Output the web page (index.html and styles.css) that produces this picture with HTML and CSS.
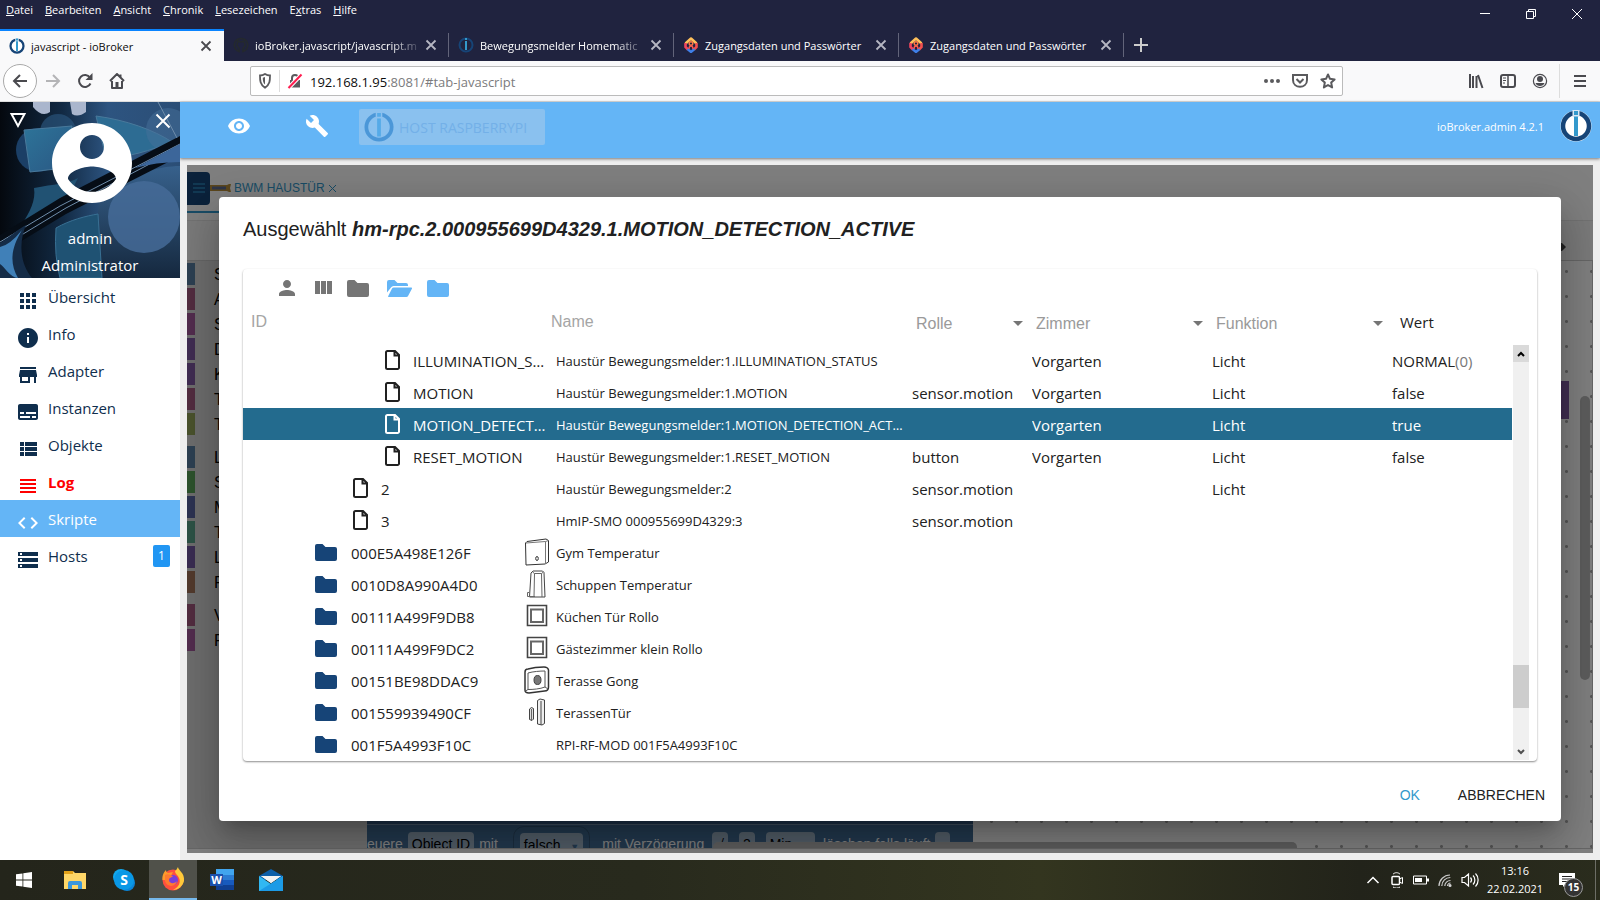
FILE: index.html
```html
<!DOCTYPE html>
<html lang="de">
<head>
    <meta charset="UTF-8">
    <meta name="viewport" content="width=device-width, initial-scale=1.0">
    <title>javascript - ioBroker</title>
    <link rel="stylesheet" href="styles.css">
</head>
<body>

    <!-- Icons -->
    <svg class="sprite" aria-hidden="true">
        <symbol id="i-x" viewBox="0 0 12 12"><path d="M1.500 1.500l9 9M10.500 1.500l-9 9" fill="none" stroke="currentColor" stroke-width="1.800"/></symbol>
        <symbol id="i-logo" viewBox="0 0 32 32"><circle cx="16" cy="16" r="15.500" fill="#fff"/><circle cx="16" cy="16" r="13" fill="none" stroke="#164477" stroke-width="4.500"/><path d="M12.500 0h7v7h-7z" fill="#d8e8f4"/><path d="M14 1h4v4h-4zM14 6.500h4v19.500h-4z" fill="#3399cc"/></symbol>
        <symbol id="i-fritz" viewBox="0 0 16 16"><path d="M2.500 6.500L8 1.500l5.500 5" fill="none" stroke="#ffc05a" stroke-width="2.600" stroke-linejoin="round"/><path d="M2.500 6v4L5 12.500" fill="none" stroke="#f0455e" stroke-width="2.600"/><path d="M13.500 6v4L11 12.500" fill="none" stroke="#f2504f" stroke-width="2.600"/><path d="M4.500 12L8 15l3.500-3" fill="none" stroke="#3e7fe8" stroke-width="2.400"/><circle cx="8" cy="6.500" r="1.800" fill="none" stroke="#ff7a45" stroke-width="1.400"/><path d="M6 12c0-4 4-4 4 0" fill="none" stroke="#ff5a50" stroke-width="1.400"/></symbol>
        <symbol id="i-file" viewBox="0 0 15 20"><path d="M1 2.500A1.500 1.500 0 0 1 2.500 1H10l4 4v12.500a1.500 1.500 0 0 1-1.500 1.500h-10A1.500 1.500 0 0 1 1 17.500zM9.500 1v4.500H14" fill="none" stroke="currentColor" stroke-width="2"/></symbol>
        <symbol id="i-folder" viewBox="0 0 22 17"><path d="M0 2a2 2 0 0 1 2-2h5.500l3 3H20a2 2 0 0 1 2 2v10a2 2 0 0 1-2 2H2a2 2 0 0 1-2-2z" fill="currentColor"/></symbol>
        <symbol id="i-open" viewBox="0 0 25 17"><path d="M0 12.500V2a2 2 0 0 1 2-2h5.500l3 3H19a2 2 0 0 1 2 2v1H6.500A3 3 0 0 0 4 7.500zM1 16.500L5 8.500A2 2 0 0 1 6.800 7.400H24a1 1 0 0 1 .9 1.400l-3.700 7A2.200 2.200 0 0 1 19.300 17H1.500z" fill="currentColor"/></symbol>
        <symbol id="i-caret" viewBox="0 0 10 5"><path d="M0 0h10L5 5z" fill="currentColor"/></symbol>
        <symbol id="i-frame" viewBox="0 0 28 28"><path d="M4.500 3.500h19v20h-19z" fill="#fff" stroke="#444" stroke-width="1.600"/><path d="M8 7.500h12v12.500H8z" fill="#fff" stroke="#666" stroke-width="2"/></symbol>
    </svg>

    <!-- Browser -->
    <header class="titlebar">
        <nav class="menubar">
            <a href="#"><u>D</u>atei</a>
            <a href="#"><u>B</u>earbeiten</a>
            <a href="#"><u>A</u>nsicht</a>
            <a href="#"><u>C</u>hronik</a>
            <a href="#"><u>L</u>esezeichen</a>
            <a href="#">E<u>x</u>tras</a>
            <a href="#"><u>H</u>ilfe</a>
        </nav>
        <div class="window-buttons">
            <button aria-label="Minimieren"><svg width="12" height="12"><path d="M1 5.500h10" stroke="#fff"/></svg></button>
            <button aria-label="Verkleinern"><svg width="12" height="12" fill="none" stroke="#fff"><path d="M1.500 3.500h7v7h-7zM3.500 3.500v-2h7v7h-2"/></svg></button>
            <button aria-label="Schließen"><svg width="12" height="12" stroke="#fff"><path d="M1 1l10 10M11 1L1 11"/></svg></button>
        </div>
    </header>

    <div class="tabs">
        <div class="tab active">
            <svg class="favicon"><use href="#i-logo"/></svg>
            <span>javascript - ioBroker</span>
            <button aria-label="Tab schließen"><svg><use href="#i-x"/></svg></button>
        </div>
        <div class="tab">
            <svg class="favicon" viewBox="0 0 16 16"><path d="M6 14.500c-7-3-6-12.500 2-13 8 .5 9 10 2 13v-3c0-1 1.500-1 2-3.500 0-2-1-3-1-4L8 5 5 4c0 1-1 2-1 4 .5 2.500 2 2.500 2 3.500z" fill="none" stroke="#24292e" stroke-width="1.600"/></svg>
            <span class="fade">ioBroker.javascript/javascript.m</span>
            <button aria-label="Tab schließen"><svg><use href="#i-x"/></svg></button>
        </div>
        <div class="tab">
            <svg class="favicon" viewBox="0 0 16 16"><circle cx="8" cy="8" r="6.500" fill="none" stroke="#164477" stroke-width="2"/><path d="M7 1h2v2H7zM7 4h2v9H7z" fill="#3399cc"/></svg>
            <span class="fade">Bewegungsmelder Homematic</span>
            <button aria-label="Tab schließen"><svg><use href="#i-x"/></svg></button>
        </div>
        <div class="tab">
            <svg class="favicon"><use href="#i-fritz"/></svg>
            <span>Zugangsdaten und Passwörter</span>
            <button aria-label="Tab schließen"><svg><use href="#i-x"/></svg></button>
        </div>
        <div class="tab">
            <svg class="favicon"><use href="#i-fritz"/></svg>
            <span>Zugangsdaten und Passwörter</span>
            <button aria-label="Tab schließen"><svg><use href="#i-x"/></svg></button>
        </div>
        <button class="new-tab" aria-label="Neuer Tab"><svg width="14" height="14" stroke="#ccc" stroke-width="2"><path d="M7 0v14M0 7h14"/></svg></button>
    </div>

    <div class="navbar">
        <div class="nav-left">
            <button class="back" aria-label="Zurück"><svg width="16" height="16"><path d="M15 8H2M8 2L2 8l6 6" fill="none" stroke="#4a4a4f" stroke-width="2"/></svg></button>
            <button aria-label="Vor"><svg width="16" height="16"><path d="M1 8h13M8 2l6 6-6 6" fill="none" stroke="#b4b4b6" stroke-width="2"/></svg></button>
            <button aria-label="Neu laden"><svg width="16" height="16"><path d="M13.500 10.500A6 6 0 1 1 13 4.500" fill="none" stroke="#4a4a4f" stroke-width="2"/><path d="M15.500 0v7h-7z" fill="#4a4a4f"/></svg></button>
            <button aria-label="Startseite"><svg width="16" height="16"><path d="M1 8l7-7 7 7M3 8v7h10V8M11.500 1.500V4" fill="none" stroke="#4a4a4f" stroke-width="2" stroke-linejoin="round"/><path d="M6.500 9h3v6h-3z" fill="#4a4a4f"/></svg></button>
        </div>
        <div class="urlbar">
            <svg class="shield" width="14" height="16"><path d="M2 2.500C4 2.500 5.500 2 7 1c1.500 1 3 1.500 5 1.500 0 5 0 9-5 12.200C2 11.500 2 7.500 2 2.500z" fill="none" stroke="#5a5a5d" stroke-width="1.800"/><path d="M7 4v7.500C5 10 4.800 7.500 4.800 4.800z" fill="#5a5a5d"/></svg>
            <svg class="lock" width="16" height="16"><path d="M5 8V5a3 3 0 0 1 6 0v3" fill="none" stroke="#5a5a5d" stroke-width="2"/><path d="M3 7h10v7.500H3z" fill="#5a5a5d"/><path d="M1.500 15L14.500 1.500" stroke="#fff" stroke-width="4"/><path d="M1.500 15L14.500 1.500" stroke="#ff1c4f" stroke-width="2"/></svg>
            <a href="#tab-javascript">192.168.1.95<span>:8081/#tab-javascript</span></a>
            <button aria-label="Aktionen"><svg width="16" height="16" fill="#5a5a5d"><circle cx="2" cy="8" r="2"/><circle cx="8" cy="8" r="2"/><circle cx="14" cy="8" r="2"/></svg></button>
            <button aria-label="Pocket"><svg width="16" height="16" fill="none" stroke="#5a5a5d" stroke-width="2"><path d="M1 2h14v5c0 9-14 9-14 0zM4.500 6L8 9.500 11.500 6"/></svg></button>
            <button aria-label="Lesezeichen"><svg width="16" height="16"><path d="M8 1.500l2 4.300 4.600.6-3.400 3.200.9 4.800L8 12l-4.100 2.400.9-4.800L1.400 6.400 6 5.800z" fill="none" stroke="#5a5a5d" stroke-width="2" stroke-linejoin="round"/></svg></button>
        </div>
        <div class="nav-right">
            <button aria-label="Bibliothek"><svg width="16" height="16" stroke="#4a4a4f" stroke-width="2"><path d="M2 1v14M5 3v12M8.500 3v12M10 2l4.500 13"/></svg></button>
            <button aria-label="Sidebar"><svg width="16" height="16" fill="none" stroke="#4a4a4f" stroke-width="2"><rect x="1" y="2" width="14" height="12" rx="2"/><path d="M8 2v12" stroke-width="1.500"/><path d="M3 5h3M3 7.500h3M3 10h2" stroke-width="1"/></svg></button>
            <button aria-label="Konto"><svg width="16" height="16"><circle cx="8" cy="8" r="6.600" fill="none" stroke="#4a4a4f" stroke-width="1.200"/><circle cx="8" cy="6" r="3" fill="#4a4a4f"/><path d="M3.500 10h9c-1 4-8 4-9 0z" fill="#4a4a4f"/></svg></button>
            <button class="menu" aria-label="Menü"><svg width="12" height="14" stroke="#4a4a4f" stroke-width="2"><path d="M0 2h12M0 7h12M0 12h12"/></svg></button>
        </div>
    </div>

    <!-- ioBroker admin -->
    <div class="app">
        <aside class="sidebar">
            <div class="user">
                <svg class="user-bg" viewBox="0 0 180 176" preserveAspectRatio="none">
                    <defs>
                        <linearGradient id="base" x1="0" y1="0" x2="1" y2="0"><stop offset="0" stop-color="#04080e"/><stop offset=".35" stop-color="#122a44"/><stop offset=".6" stop-color="#2d5480"/><stop offset="1" stop-color="#2b4e76"/></linearGradient>
                        <linearGradient id="glass" x1="0" y1="0" x2="1" y2="1"><stop offset="0" stop-color="#2d7499"/><stop offset="1" stop-color="#2a5783"/></linearGradient>
                        <linearGradient id="low" x1="0" y1="0" x2="0" y2="1"><stop offset="0" stop-color="#37618c"/><stop offset="1" stop-color="#15283e"/></linearGradient>
                    </defs>
                    <path d="M0 0h180v176H0z" fill="url(#base)"/>
                    <path d="M33 0h17v10q-8 6-17-5zM70 0h16v10q-8 6-14 2z" fill="#aab6cd"/>
                    <circle cx="38" cy="48" r="22" fill="#1b3f66"/>
                    <circle cx="58" cy="30" r="18" fill="#2a5279" opacity=".7"/>
                    <path d="M24 28l48-4-8 42-34 4z" fill="url(#glass)" stroke="#49799b"/>
                    <path d="M96 14c30 4 58 14 76 26-20 8-46 16-66 16z" fill="#2d6c93" stroke="#49799b"/>
                    <circle cx="168" cy="28" r="22" fill="#456f9a" opacity=".5"/>
                    <path d="M34 86c20-4 34-4 44-10l-12 24-44 22c8-12 14-24 12-36z" fill="#215273"/>
                    <path d="M100 92c30-20 60-28 80-28v112H90z" fill="url(#low)"/>
                    <path d="M56 126c14-8 30-12 42-14l4 64H60q-6-22-4-50z" fill="#1f5273" stroke="#397093"/>
                    <path d="M0 133L60 96l120-62v20L66 112 0 152z" fill="#060d16"/>
                    <path d="M0 140L60 104l120-62M0 146l66-40 114-60M158 0l19 36" fill="none" stroke="#6f8daa"/>
                    <path d="M0 141c10-6 18-14 26-18-6 14-8 36 6 53H0z" fill="#152c47"/>
                    <path d="M0 145q10-2 22-17c-12 20-12 34-4 48-8 0-14-12-18-14z" fill="#4080b8"/>
                    <circle cx="144" cy="115" r="36" fill="#456b98" opacity=".85"/>
                    <path d="M135 66l45-24v18q-24 0-45 6z" fill="#3c669a"/>
                </svg>
                <svg class="tri" width="18" height="17"><path d="M2.500 2h13L9 14z" fill="none" stroke="#fff" stroke-width="2"/></svg>
                <button class="close" aria-label="Menü schließen"><svg width="16" height="16" stroke="#fff" stroke-width="2"><path d="M1.500 1.500l13 13M14.500 1.500l-13 13"/></svg></button>
                <svg class="avatar" viewBox="2 2 20 20"><path d="M12 2C6.480 2 2 6.480 2 12s4.480 10 10 10 10-4.480 10-10S17.520 2 12 2zm0 3c1.660 0 3 1.340 3 3s-1.340 3-3 3-3-1.340-3-3 1.340-3 3-3zm0 14.200c-2.500 0-4.710-1.280-6-3.220.03-1.990 4-3.080 6-3.080 1.990 0 5.970 1.090 6 3.080-1.290 1.940-3.500 3.220-6 3.220z" fill="#fff"/></svg>
                <p>admin</p>
                <p>Administrator</p>
            </div>
            <nav class="side-nav">
                <a href="#tab-intro"><svg viewBox="0 0 24 24"><path d="M4 8h4V4H4v4zm6 12h4v-4h-4v4zm-6 0h4v-4H4v4zm0-6h4v-4H4v4zm6 0h4v-4h-4v4zm6-10v4h4V4h-4zm-6 4h4V4h-4v4zm6 6h4v-4h-4v4zm0 6h4v-4h-4v4z"/></svg>Übersicht</a>
                <a href="#tab-info"><svg viewBox="0 0 24 24"><path d="M12 2C6.480 2 2 6.480 2 12s4.480 10 10 10 10-4.480 10-10S17.520 2 12 2zm1 15h-2v-6h2v6zm0-8h-2V7h2v2z"/></svg>Info</a>
                <a href="#tab-adapters"><svg viewBox="0 0 24 24"><path d="M20 4H4v2h16V4zm1 10v-2l-1-5H4l-1 5v2h1v6h10v-6h4v6h2v-6h1zm-9 4H6v-4h6v4z"/></svg>Adapter</a>
                <a href="#tab-instances"><svg viewBox="0 0 24 24"><path d="M20 4H4c-1.100 0-2 .9-2 2v12c0 1.100.9 2 2 2h16c1.100 0 2-.9 2-2V6c0-1.100-.9-2-2-2zM4 12h4v2H4v-2zm10 6H4v-2h10v2zm6 0h-4v-2h4v2zm0-4H10v-2h10v2z"/></svg>Instanzen</a>
                <a href="#tab-objects"><svg viewBox="0 0 24 24"><path d="M4 14h4v-4H4v4zm0 5h4v-4H4v4zM4 9h4V5H4v4zm5 5h12v-4H9v4zm0 5h12v-4H9v4zM9 5v4h12V5H9z"/></svg>Objekte</a>
                <a href="#tab-logs" class="alert"><svg viewBox="0 0 24 24"><path d="M4 15h16v-2H4v2zm0 4h16v-2H4v2zm0-8h16V9H4v2zm0-6v2h16V5H4z"/></svg>Log</a>
                <a href="#tab-javascript" class="active"><svg viewBox="0 0 24 24"><path d="M9.400 16.600L4.800 12l4.600-4.600L8 6l-6 6 6 6 1.400-1.400zm5.200 0l4.600-4.600-4.600-4.600L16 6l6 6-6 6-1.400-1.400z"/></svg>Skripte</a>
                <a href="#tab-hosts"><svg viewBox="0 0 24 24"><path d="M2 20h20v-4H2v4zm2-3h2v2H4v-2zM2 4v4h20V4H2zm4 3H4V5h2v2zm-4 7h20v-4H2v4zm2-3h2v2H4v-2z"/></svg>Hosts<span class="badge">1</span></a>
            </nav>
        </aside>

        <main class="main">
            <div class="appbar">
                <button class="app-icon" aria-label="Ansicht"><svg width="24" height="24" viewBox="0 0 24 24" fill="#fff"><path d="M12 4.500C7 4.500 2.730 7.610 1 12c1.730 4.390 6 7.500 11 7.500s9.270-3.110 11-7.500c-1.730-4.390-6-7.500-11-7.500zM12 17c-2.760 0-5-2.240-5-5s2.240-5 5-5 5 2.240 5 5-2.240 5-5 5zm0-8c-1.660 0-3 1.340-3 3s1.340 3 3 3 3-1.340 3-3-1.340-3-3-3z"/></svg></button>
                <button class="app-icon" aria-label="Einstellungen"><svg width="24" height="24" viewBox="0 0 24 24" fill="#fff"><path d="M22.700 19l-9.100-9.100c.9-2.300.4-5-1.500-6.900-2-2-5-2.400-7.400-1.300L9 6 6 9 1.600 4.700C.4 7.100.9 10.100 2.900 12.100c1.900 1.900 4.600 2.400 6.900 1.500l9.100 9.100c.4.400 1 .4 1.400 0l2.300-2.300c.5-.4.5-1.100.1-1.400z"/></svg></button>
                <button class="host" disabled><svg viewBox="0 0 32 32"><circle cx="16" cy="16" r="13.500" fill="none" stroke="#4b97d8" stroke-width="4"/><path d="M12.500 0h7v7h-7z" fill="#8cc1ef"/><path d="M14 1h4v4h-4zM14 7h4v19h-4z" fill="#55aae8"/></svg>HOST RASPBERRYPI</button>
                <span class="version">ioBroker.admin 4.2.1</span>
                <svg class="logo"><use href="#i-logo"/></svg>
            </div>

            <div class="frame">
                <div class="editor">
                    <div class="script-tabs">
                        <button class="burger" aria-label="Skripte"><svg width="12" height="10" stroke="#35a0d8" stroke-width="1.200"><path d="M0 1h12M0 5h12M0 9h12"/></svg></button>
                        <svg class="blockly" width="21" height="8"><path d="M0 1h17l2-1h2l-1 4 1 4h-2l-2-1H0z" fill="#b98f3a"/><path d="M2 2.500h14v3H2z" fill="#5f6c90"/></svg>
                        <a href="#script">BWM HAUSTÜR</a>
                        <svg width="9" height="9" stroke="#3399cc"><path d="M1 1l7 7M8 1L1 8"/></svg>
                    </div>
                    <div class="script-bar"><svg width="6" height="8"><path d="M0 0h2l4 4-4 4H0z" fill="#444"/></svg></div>
                    <div class="workspace">
                        <ul class="toolbox">
                            <li class="c-blue">System</li>
                            <li class="c-rose">Aktionen</li>
                            <li class="c-pink">SendTo</li>
                            <li class="c-violet">Datum und Zeit</li>
                            <li class="c-violet">Konvertierung</li>
                            <li class="c-rose">Trigger</li>
                            <li class="c-olive">Timeouts</li>
                            <li class="c-blue gap">Logik</li>
                            <li class="c-green">Schleifen</li>
                            <li class="c-indigo">Mathematik</li>
                            <li class="c-teal">Text</li>
                            <li class="c-purple">Listen</li>
                            <li class="c-brown">Farbe</li>
                            <li class="c-rose gap">Variablen</li>
                            <li class="c-pink">Funktionen</li>
                        </ul>
                        <div class="canvas">
                            <div class="block-edge"></div>
                            <div class="block">
                                <span>euere</span><b>Object ID</b><span>mit</span><b class="plug">falsch <i>▼</i></b><span>mit Verzögerung</span><b class="field">√</b><b class="field">2</b><b class="field">Min <i>▼</i></b><span>löschen falls läuft</span><b class="tick"></b>
                            </div>
                            <div class="v-scroll"></div>
                            <div class="h-scroll"></div>
                        </div>
                    </div>
                </div>

                <!-- Dialog: select object id -->
                <div class="backdrop">
                    <section class="dialog" role="dialog" aria-labelledby="dialog-title">
                        <h2 id="dialog-title">Ausgewählt <em>hm-rpc.2.000955699D4329.1.MOTION_DETECTION_ACTIVE</em></h2>
                        <div class="card">
                            <div class="tools">
                                <button aria-label="Expertenmodus"><svg width="24" height="24" viewBox="0 0 24 24" fill="#757575"><path d="M12 12c2.210 0 4-1.790 4-4s-1.790-4-4-4-4 1.790-4 4 1.790 4 4 4zm0 2c-2.670 0-8 1.340-8 4v2h16v-2c0-2.660-5.330-4-8-4z"/></svg></button>
                                <button aria-label="Spalten"><svg width="24" height="24" viewBox="0 0 24 24" fill="#757575"><path d="M10 18h5V5h-5v13zm-6 0h5V5H4v13zM16 5v13h5V5h-5z"/></svg></button>
                                <button class="grey" aria-label="Liste"><svg width="22" height="17"><use href="#i-folder"/></svg></button>
                                <button class="sky" aria-label="Alle öffnen"><svg width="25" height="17"><use href="#i-open"/></svg></button>
                                <button class="sky" aria-label="Alle schließen"><svg width="22" height="17"><use href="#i-folder"/></svg></button>
                            </div>
                            <div class="list">
                                <table>
                                    <colgroup><col class="w-id"><col><col class="w-role"><col class="w-room"><col class="w-room"><col class="w-role"></colgroup>
                                    <thead>
                                        <tr>
                                            <th><input type="text" placeholder="ID" aria-label="ID"></th>
                                            <th class="th-name"><input type="text" placeholder="Name" aria-label="Name"></th>
                                            <th><div class="pick"><select aria-label="Rolle"><option>Rolle</option></select><svg><use href="#i-caret"/></svg></div></th>
                                            <th><div class="pick"><select aria-label="Zimmer"><option>Zimmer</option></select><svg><use href="#i-caret"/></svg></div></th>
                                            <th><div class="pick"><select aria-label="Funktion"><option>Funktion</option></select><svg><use href="#i-caret"/></svg></div></th>
                                            <th class="value">Wert</th>
                                        </tr>
                                    </thead>
                                    <tbody>
                                        <tr><td><div class="id leaf deep"><svg><use href="#i-file"/></svg><span>ILLUMINATION_STATUS</span></div></td><td class="name">Haustür Bewegungsmelder:1.ILLUMINATION_STATUS</td><td></td><td>Vorgarten</td><td>Licht</td><td>NORMAL<small>(0)</small></td></tr>
                                        <tr><td><div class="id leaf deep"><svg><use href="#i-file"/></svg><span>MOTION</span></div></td><td class="name">Haustür Bewegungsmelder:1.MOTION</td><td>sensor.motion</td><td>Vorgarten</td><td>Licht</td><td>false</td></tr>
                                        <tr class="selected"><td><div class="id leaf deep"><svg><use href="#i-file"/></svg><span>MOTION_DETECTION_ACTIVE</span></div></td><td class="name">Haustür Bewegungsmelder:1.MOTION_DETECTION_ACTIVE</td><td></td><td>Vorgarten</td><td>Licht</td><td>true</td></tr>
                                        <tr><td><div class="id leaf deep"><svg><use href="#i-file"/></svg><span>RESET_MOTION</span></div></td><td class="name">Haustür Bewegungsmelder:1.RESET_MOTION</td><td>button</td><td>Vorgarten</td><td>Licht</td><td>false</td></tr>
                                        <tr><td><div class="id leaf"><svg><use href="#i-file"/></svg><span>2</span></div></td><td class="name">Haustür Bewegungsmelder:2</td><td>sensor.motion</td><td></td><td>Licht</td><td></td></tr>
                                        <tr><td><div class="id leaf"><svg><use href="#i-file"/></svg><span>3</span></div></td><td class="name">HmIP-SMO 000955699D4329:3</td><td>sensor.motion</td><td></td><td></td><td></td></tr>
                                        <tr><td><div class="id"><svg><use href="#i-folder"/></svg><span>000E5A498E126F</span><svg class="device" viewBox="0 0 28 28"><path d="M2.500 5L4 3.500 23 1l2.500 1.500V24L22 26 3 27z" fill="#fff" stroke="#333"/><path d="M3 5l19.500-1.500V26M22.500 3.500l3-1" fill="none" stroke="#777"/><ellipse cx="14" cy="20.500" rx="1.300" ry="2" fill="none" stroke="#333"/></svg></div></td><td class="name">Gym Temperatur</td><td></td><td></td><td></td><td></td></tr>
                                        <tr><td><div class="id"><svg><use href="#i-folder"/></svg><span>0010D8A990A4D0</span><svg class="device" viewBox="0 0 28 28"><path d="M6.500 27L8 3l2-2h9.500l1.500 1.500L22 27z" fill="#fff" stroke="#444"/><path d="M11 27l.5-23.500h7L19 27M11.500 3.500L9.500 2M18.500 3.500l2-1.500M6 22.500H4.500v4H12" fill="none" stroke="#666"/></svg></div></td><td class="name">Schuppen Temperatur</td><td></td><td></td><td></td><td></td></tr>
                                        <tr><td><div class="id"><svg><use href="#i-folder"/></svg><span>00111A499F9DB8</span><svg class="device"><use href="#i-frame"/></svg></div></td><td class="name">Küchen Tür Rollo</td><td></td><td></td><td></td><td></td></tr>
                                        <tr><td><div class="id"><svg><use href="#i-folder"/></svg><span>00111A499F9DC2</span><svg class="device"><use href="#i-frame"/></svg></div></td><td class="name">Gästezimmer klein Rollo</td><td></td><td></td><td></td><td></td></tr>
                                        <tr><td><div class="id"><svg><use href="#i-folder"/></svg><span>00151BE98DDAC9</span><svg class="device" viewBox="0 0 28 28"><path d="M2 6c0-2 1-3 3-3 5-1.500 11-2 16-2 3 0 4 1 4.500 3v17c0 3-1 4-4 4L6 27c-3 0-4-1-4-3z" fill="#fff" stroke="#333" stroke-width="1.500"/><path d="M5 7c5-1.500 12-2 17-2v16c-5 2-12 2.500-17 2.500zM2.500 25L5 23.500M22 21l3 2" fill="none" stroke="#555"/><ellipse cx="14.500" cy="14" rx="3.500" ry="4.500" fill="#777" stroke="#444"/></svg></div></td><td class="name">Terasse Gong</td><td></td><td></td><td></td><td></td></tr>
                                        <tr><td><div class="id"><svg><use href="#i-folder"/></svg><span>001559939490CF</span><svg class="device" viewBox="0 0 28 28"><path d="M14.500 2.500L17 1l4.500 1v23.500L19 27l-4.500-1z" fill="#eee" stroke="#444"/><path d="M18 3v24" stroke="#444"/><path d="M6.500 11l2-1.500 2 1V21L9 22.500l-2.500-1z" fill="#ddd" stroke="#444"/><path d="M8.500 11v11" stroke="#666"/></svg></div></td><td class="name">TerassenTür</td><td></td><td></td><td></td><td></td></tr>
                                        <tr><td><div class="id"><svg><use href="#i-folder"/></svg><span>001F5A4993F10C</span></div></td><td class="name">RPI-RF-MOD 001F5A4993F10C</td><td></td><td></td><td></td><td></td></tr>
                                    </tbody>
                                </table>
                                <div class="scrollbar">
                                    <button class="up" aria-label="Nach oben"><svg width="8" height="6"><path d="M1 5l3-3 3 3" fill="none" stroke="#000" stroke-width="2"/></svg></button>
                                    <div class="thumb"></div>
                                    <button class="down" aria-label="Nach unten"><svg width="8" height="6"><path d="M1 1l3 3 3-3" fill="none" stroke="#505050" stroke-width="2"/></svg></button>
                                </div>
                            </div>
                        </div>
                        <div class="actions">
                            <button class="primary">OK</button>
                            <button>ABBRECHEN</button>
                        </div>
                    </section>
                </div>
            </div>
        </main>
    </div>

    <!-- Windows taskbar -->
    <footer class="taskbar">
        <button class="start" aria-label="Start"><svg width="16" height="16" fill="#fff"><path d="M0 2.300L6.500 1.400v6.200H0zM7.300 1.300L16 0v7.600H7.300zM0 8.400h6.500v6.200L0 13.700zM7.300 8.400H16V16l-8.700-1.300z"/></svg></button>
        <button aria-label="Explorer"><svg width="24" height="20"><path d="M1 1h9l2 2h11v16H1z" fill="#ffd768"/><path d="M1 1h9v3H1z" fill="#e3a21a"/><path d="M5 19v-6a2 2 0 0 1 2-2h10a2 2 0 0 1 2 2v6h-4v-4H9v4z" fill="#3b97dd"/></svg></button>
        <button aria-label="Skype"><svg width="24" height="24"><circle cx="9" cy="9" r="8" fill="#12a8ee"/><circle cx="15" cy="15" r="8" fill="#0a84d8"/><circle cx="12" cy="12" r="10" fill="#0a98e6"/><text x="12" y="17" text-anchor="middle" class="glyph">S</text></svg></button>
        <button class="running" aria-label="Firefox"><svg width="24" height="24"><circle cx="12" cy="13" r="10.500" fill="#ff4f3e"/><path d="M14 4c2-1 2-3 3-4 0 3 7 6 6 14-1 5-6 9-11 9 6-3 8-8 6-12-1-3-4-4-4-7z" fill="#ffc93a"/><path d="M1.500 13C1 8 3 5 5 3c0 2 1 2 2 3l5-1-2 4-4 4z" fill="#ff9a2b"/><circle cx="12" cy="13" r="5" fill="#7a3fd8"/><path d="M4 8c4-2 6 1 8 1-1 2-4 1-4 4 0 4 6 4 8 1-1 6-10 7-12 0z" fill="#ff7a30"/></svg></button>
        <button aria-label="Word"><svg width="24" height="22"><path d="M6 0h18v6H6z" fill="#41a5ee"/><path d="M6 6h18v5H6z" fill="#2b7cd3"/><path d="M6 11h18v5H6z" fill="#185abd"/><path d="M6 16h18v5H6z" fill="#103f91"/><path d="M0 5h13v12H0z" fill="#1a50ad"/><text x="6.500" y="15" text-anchor="middle" class="glyph small">W</text></svg></button>
        <button aria-label="Mail"><svg width="24" height="24"><path d="M0 8l12-7 12 7v4H0z" fill="#0c5ea8"/><path d="M0 8v15h24V8l-12 8z" fill="#31b8f2"/><path d="M2 8h20l-10 7z" fill="#f2f2f2"/><path d="M0 23L24 8v15z" fill="#1c9be6"/><path d="M2 8h20l-10 7z" fill="#f2f2f2"/></svg></button>
        <div class="tray">
            <svg width="16" height="16" fill="none" stroke="#fff" stroke-width="1.500"><path d="M2.500 11L8 5.500l5.500 5.500"/></svg>
            <svg width="16" height="16" fill="none" stroke="#fff"><rect x="3" y="4.500" width="7.500" height="8" rx="1" stroke-width="1.500"/><path d="M10.500 7l3-1.500v6l-3-1.500M4 2.200c2-2 5-2 7 0M4 15c2 1.500 5 1.500 7 0"/></svg>
            <svg width="16" height="16"><path d="M.5 4h13v8H.5z" fill="none" stroke="#fff"/><path d="M2 6h7v4H2z" fill="#fff"/><path d="M14 6.500h2v3h-2z" fill="#fff"/></svg>
            <svg width="16" height="16" fill="none" stroke="#ccc" stroke-width="1.200"><path d="M2 14C2 8 7 3 13 3M4.800 14c0-5 4-8.500 8.500-8.500M7.800 14c0-3 2.500-5.500 5.700-5.500M10.500 14c0-1.500 1.500-3 3-3"/><circle cx="13" cy="13.500" r="1" fill="#fff"/></svg>
            <svg width="18" height="16" fill="none" stroke="#fff" stroke-width="1.200"><path d="M1 5.500h2.500l4-3.500v12l-4-3.500H1zM9.500 5.500c1.300 1.500 1.300 3.500 0 5M12 3.500c2.500 2.500 2.500 6.500 0 9M14.500 1.500c3.500 3.500 3.500 9.500 0 13"/></svg>
            <time>13:16<br>22.02.2021</time>
            <button class="notes" aria-label="Benachrichtigungen"><svg width="16" height="14"><path d="M0 0h16v12H6l-2 2v-2H0z" fill="#fff"/><path d="M3 3.500h10M3 6h10M3 8.500h7" stroke="#222"/></svg><span>15</span></button>
        </div>
    </footer>

</body>
</html>
```
FILE: styles.css
```css
* {
    box-sizing: border-box;
}
body {
    margin: 0;
    height: 100vh;
    display: flex;
    flex-direction: column;
    overflow: hidden;
    font-family: "Open Sans", "Noto Sans", sans-serif;
    font-size: 15px;
    background: #eee;
}
a {
    color: inherit;
    text-decoration: none;
}
button {
    display: flex;
    align-items: center;
    justify-content: center;
    padding: 0;
    border: none;
    background: none;
    font: inherit;
    color: inherit;
    cursor: pointer;
}
svg {
    flex: none;
    display: block;
}
.sprite {
    position: absolute;
    width: 0;
    height: 0;
}

/* browser */
.titlebar {
    height: 29px;
    flex: none;
    display: flex;
    justify-content: space-between;
    background: #20233f;
    color: #fff;
    font-size: 11px;
}
.menubar {
    display: flex;
    gap: 12px;
    padding-left: 6px;
    line-height: 20px;
}
.window-buttons {
    display: flex;
}
.window-buttons button {
    width: 46px;
    height: 28px;
}
.tabs {
    height: 32px;
    flex: none;
    display: flex;
    background: #20233f;
    color: #fff;
    font-size: 11px;
}
.tab {
    width: 225px;
    display: flex;
    align-items: center;
    padding: 0 10px 0 9px;
    position: relative;
}
.tab span {
    flex: 1;
    margin-left: 6px;
    overflow: hidden;
    white-space: nowrap;
}
.tab .fade {
    -webkit-mask-image: linear-gradient(to right, #000 80%, transparent);
    mask-image: linear-gradient(to right, #000 80%, transparent);
}
.tab + .tab::after {
    content: "";
    height: 24px;
    border-right: 1px solid #62647a;
    position: absolute;
    right: 0;
}
.tab.active {
    width: 224px;
    background: #f9f9fa;
    color: #0c0c0d;
    border-top: 2px solid #0a84ff;
}
.tab .favicon {
    width: 16px;
    height: 16px;
}
.tab button {
    width: 16px;
    height: 16px;
    color: #b5b6c2;
}
.tab button svg {
    width: 12px;
    height: 12px;
}
.tab.active button {
    color: #4a4a4f;
}
.new-tab {
    width: 34px;
}
.navbar {
    height: 41px;
    flex: none;
    display: flex;
    align-items: center;
    background: #f9f9fa;
    border-bottom: 1px solid #ddd;
}
.nav-left {
    width: 250px;
    display: flex;
    padding-left: 3px;
}
.nav-left button {
    width: 32px;
    height: 34px;
}
.nav-left .back {
    width: 34px;
    background: #fff;
    border: 1px solid #aaa;
    border-radius: 50%;
}
.urlbar {
    flex: 1;
    height: 30px;
    display: flex;
    align-items: center;
    border: 1px solid #bbb;
    border-radius: 2px;
    background: #fff;
    font-size: 13px;
}
.urlbar .shield {
    margin: 0 7px;
}
.urlbar .lock {
    width: 24px;
    padding-left: 7px;
    border-left: 1px solid #ddd;
    height: 22px;
    overflow: visible;
    padding-top: 3px;
}
.urlbar a {
    flex: 1;
    margin-left: 7px;
    padding-top: 2px;
    color: #0c0c0d;
}
.urlbar a span {
    color: #7b7b7d;
}
.urlbar button {
    width: 28px;
    height: 28px;
}
.nav-right {
    width: 257px;
    display: flex;
    justify-content: flex-end;
}
.nav-right button {
    width: 32px;
    height: 34px;
}
.nav-right .menu {
    width: 41px;
    margin-left: 3px;
    border-left: 1px solid #ddd;
}

/* admin */
.app {
    flex: 1;
    min-height: 0;
    display: flex;
}
.sidebar {
    width: 180px;
    flex: none;
    background: #fff;
    color: #0f2e4d;
}
.user {
    height: 176px;
    position: relative;
    padding-top: 21px;
    color: #fff;
    text-align: center;
    overflow: hidden;
}
.user p {
    position: relative;
    margin: 0;
    line-height: 27px;
}
.user .avatar {
    position: relative;
    width: 80px;
    height: 80px;
    margin: 0 auto 22px 52px;
}
.user-bg {
    position: absolute;
    top: 0;
    left: 0;
    width: 100%;
    height: 100%;
}
.user .tri {
    position: absolute;
    top: 10px;
    left: 9px;
}
.user .close {
    position: absolute;
    top: 11px;
    right: 9px;
}
.side-nav a {
    height: 37px;
    display: flex;
    align-items: center;
    padding-left: 16px;
}
.side-nav svg {
    width: 24px;
    height: 24px;
    margin: 9px 8px 0 0;
    fill: currentColor;
}
.side-nav .alert {
    color: #f00;
    font-weight: bold;
}
.side-nav .active {
    background: #64b5f6;
    color: #fff;
}
.badge {
    width: 17px;
    margin: 0 10px 0 auto;
    border-radius: 2px;
    background: #2196f3;
    color: #fff;
    font-size: 12px;
    line-height: 22px;
    text-align: center;
}
.main {
    flex: 1;
    min-width: 0;
    display: flex;
    flex-direction: column;
}
.appbar {
    height: 56px;
    flex: none;
    display: flex;
    padding: 7px 8px 0 20px;
    background: #64b5f6;
    box-shadow: 0 1px 3px rgba(0, 0, 0, .5);
}
.app-icon {
    width: 78px;
    height: 34px;
}
.host {
    width: 186px;
    height: 36px;
    margin-left: 3px;
    padding: 0 5px;
    gap: 5px;
    justify-content: flex-start;
    border-radius: 2px;
    background: #8ac1ef;
    color: #73b0e8;
    font-size: 14px;
}
.host svg {
    width: 30px;
    height: 30px;
}
.version {
    margin-left: auto;
    color: #fff;
    font-size: 11px;
    line-height: 36px;
}
.logo {
    width: 32px;
    height: 32px;
    margin: 1px 0 0 16px;
}

/* script editor */
.frame {
    flex: 1;
    min-height: 0;
    margin: 7px;
    position: relative;
    display: flex;
    overflow: hidden;
    background: #fff;
    font-family: "Liberation Sans", Arial, sans-serif;
}
.editor {
    flex: 1;
    min-width: 0;
    display: flex;
    flex-direction: column;
}
.script-tabs {
    height: 48px;
    display: flex;
    align-items: center;
    padding-bottom: 2px;
    color: #3399cc;
    font-size: 12px;
    background: linear-gradient(#3399cc, #3399cc) 0 100% / 160px 2px no-repeat;
}
.burger {
    width: 23px;
    height: 33px;
    border-radius: 0 4px 4px 0;
    background: #164477;
}
.blockly {
    margin-right: 3px;
}
.script-tabs a {
    margin-right: 3px;
}
.script-bar {
    height: 40px;
    margin-top: 7px;
    padding: 22px 27px 0 0;
    display: flex;
    justify-content: flex-end;
    border-top: 1px solid #e4e4e4;
    background: #f5f5f5;
}
.workspace {
    flex: 1;
    min-height: 0;
    display: flex;
    margin-bottom: 4px;
    border: 1px solid #ccc;
    border-left: none;
}
.toolbox {
    width: 180px;
    margin: 0;
    padding: 2px 0 0;
    list-style: none;
    background: #ddd;
    font-size: 16px;
}
.toolbox li {
    height: 22px;
    margin-bottom: 3px;
    padding-left: 19px;
    border-left: 8px solid;
    border-left-color: var(--c);
    line-height: 24px;
    color: #000;
}
.toolbox .gap {
    margin-top: 11px;
}
.c-blue { --c: #5b80a5; }
.c-rose { --c: #a55b80; }
.c-pink { --c: #a55b9c; }
.c-violet { --c: #805ba5; }
.c-olive { --c: #95a55b; }
.c-green { --c: #5ba55b; }
.c-indigo { --c: #5b67a5; }
.c-teal { --c: #5ba58c; }
.c-purple { --c: #745ba5; }
.c-brown { --c: #a5745b; }
.canvas {
    flex: 1;
    min-width: 0;
    position: relative;
    background: radial-gradient(circle, #aaa 1px, transparent 2px) 12px 23px / 25px 25px;
}
.block {
    position: absolute;
    left: 0;
    bottom: 0;
    width: 606px;
    height: 24px;
    display: flex;
    align-items: flex-start;
    gap: 5px;
    padding-top: 7px;
    overflow: hidden;
    border-top: 1px solid #7f9cb8;
    background: #45719b;
    box-shadow: 0 -8px 0 #3a618a;
    color: #fff;
    font-size: 14px;
    line-height: 24px;
    white-space: nowrap;
}
.block b {
    height: 24px;
    padding: 0 4px;
    border-radius: 4px;
    background: #a2b8cd;
    color: #000;
    font-weight: normal;
}
.block .plug {
    margin: 1px 14px 0 17px;
    outline: 1px solid #365a7c;
    outline-offset: 6px;
}
.block .field {
    margin: 0 3px;
}
.block i {
    margin-left: 6px;
    color: #45719b;
    font-size: 9px;
    font-style: normal;
}
.block .tick {
    width: 15px;
}
.block-edge {
    position: absolute;
    right: 23px;
    top: 120px;
    width: 20px;
    height: 38px;
    background: #805ba5;
}
.v-scroll {
    position: absolute;
    right: 2px;
    top: 135px;
    width: 10px;
    height: 284px;
    border-radius: 5px;
    background: #bbb;
}
.h-scroll {
    position: absolute;
    left: 346px;
    right: 295px;
    bottom: 0;
    height: 6px;
    border-radius: 5px 5px 0 0;
    background: #bbb;
}

/* dialog */
.backdrop {
    position: absolute;
    inset: 0;
    display: flex;
    padding: 32px;
    background: rgba(0, 0, 0, .5);
}
.dialog {
    flex: 1;
    min-width: 0;
    display: flex;
    flex-direction: column;
    padding: 0 24px;
    border-radius: 4px;
    background: #fff;
    color: #212121;
    box-shadow: 0 11px 15px -7px rgba(0, 0, 0, .2), 0 24px 38px 3px rgba(0, 0, 0, .14), 0 9px 46px 8px rgba(0, 0, 0, .12);
}
.dialog h2 {
    margin: 0;
    padding: 16px 0 24px;
    font-size: 20px;
    font-weight: normal;
    line-height: 32px;
}
.dialog h2 em {
    font-weight: bold;
}
.card {
    flex: 1;
    min-height: 0;
    overflow: hidden;
    border-radius: 4px;
    box-shadow: 0 1px 2px rgba(0, 0, 0, .45);
    font-family: "Open Sans", "Noto Sans", sans-serif;
}
.tools {
    height: 38px;
    display: flex;
    align-items: center;
    gap: 12px;
    padding-left: 32px;
}
.tools .grey {
    margin-right: 3px;
    color: #757575;
}
.tools .sky {
    margin-left: 3px;
    color: #64b5f6;
}
.list {
    display: flex;
}
table {
    flex: 1;
    min-width: 0;
    width: 100%;
    table-layout: fixed;
    border-collapse: collapse;
}
.w-id {
    width: 308px;
}
.w-role {
    width: 120px;
}
.w-room {
    width: 180px;
}
th {
    height: 37px;
    padding: 0 0 8px;
    font-weight: normal;
    text-align: left;
}
th input {
    display: block;
    width: 100%;
    padding: 0 0 0 8px;
    border: none;
    outline: none;
    font: 16px/20px "Liberation Sans", Arial, sans-serif;
}
th.th-name input {
    padding-left: 0;
}
th input::placeholder {
    color: #a5a5a5;
}
th.value {
    padding-left: 8px;
}
.pick {
    display: flex;
    align-items: center;
    padding: 4px 9px 0 4px;
}
.pick select {
    flex: 1;
    min-width: 0;
    padding: 0;
    border: none;
    appearance: none;
    background: none;
    color: #9a9a9a;
    font: 16px/20px "Liberation Sans", Arial, sans-serif;
}
.pick svg {
    width: 10px;
    height: 5px;
    color: #757575;
}
td {
    height: 32px;
    padding: 0;
    overflow: hidden;
    white-space: nowrap;
    text-overflow: ellipsis;
}
td + td {
    padding-top: 2px;
    line-height: 30px;
}
td.name {
    padding-left: 5px;
    padding-right: 6px;
    font-size: 13px;
}
td small {
    font-size: 15px;
    color: #777;
}
.id {
    height: 32px;
    display: flex;
    align-items: center;
    padding-left: 72px;
    color: #212121;
}
.id svg {
    width: 22px;
    height: 17px;
    margin-right: 14px;
    color: #164477;
}
.id span {
    padding-top: 2px;
    line-height: 30px;
    overflow: hidden;
    text-overflow: ellipsis;
}
.id.leaf {
    padding: 0 3px 0 110px;
}
.id.deep {
    padding-left: 142px;
}
.id.leaf svg {
    width: 15px;
    height: 20px;
    margin-right: 13px;
    color: inherit;
}
.id .device {
    width: 28px;
    height: 28px;
    margin: 0 0 0 auto;
}
.selected,
.selected .id {
    background: #236b8e;
    color: #fff;
}
.scrollbar {
    width: 16px;
    margin: 38px 8px 0 1px;
    display: flex;
    flex-direction: column;
    background: #f0f0f0;
}
.scrollbar button {
    height: 17px;
}
.scrollbar .up {
    background: #dadada;
}
.scrollbar .down {
    margin-top: auto;
}
.thumb {
    height: 43px;
    margin-top: 303px;
    background: #cdcdcd;
}
.actions {
    display: flex;
    justify-content: flex-end;
    align-items: center;
    gap: 38px;
    height: 60px;
    padding: 8px 0 0;
    margin-right: -8px;
    font-size: 14px;
}
.actions .primary {
    color: #3399cc;
}

/* taskbar */
.taskbar {
    height: 40px;
    flex: none;
    display: flex;
    background: linear-gradient(to right, #24251b, #282a1d 40%, #33351f 65%, #22231a 85%, #2a2c1d);
    color: #fff;
}
.taskbar > button {
    width: 48px;
    margin-right: 1px;
}
.taskbar > .start {
    margin-right: 3px;
}
.taskbar > .running {
    background: #50514a;
    border-bottom: 2px solid #76b9ed;
}
.glyph {
    fill: #fff;
    font-size: 14px;
    font-weight: bold;
}
.glyph.small {
    font-size: 11px;
}
.tray {
    margin-left: auto;
    display: flex;
    align-items: center;
    gap: 8px;
    padding-right: 4px;
    border-right: 1px solid #6d6e66;
    margin-right: 4px;
}
.tray time {
    width: 56px;
    margin-right: 4px;
    font-size: 11px;
    line-height: 18px;
    text-align: center;
}
.notes {
    position: relative;
    width: 36px;
    height: 40px;
    margin: 0 6px 0 -6px;
}
.notes span {
    position: absolute;
    right: 2px;
    top: 18px;
    width: 19px;
    height: 19px;
    border: 1px solid #999;
    border-radius: 50%;
    background: #333;
    font-size: 10px;
    font-weight: bold;
    line-height: 17px;
}
```
